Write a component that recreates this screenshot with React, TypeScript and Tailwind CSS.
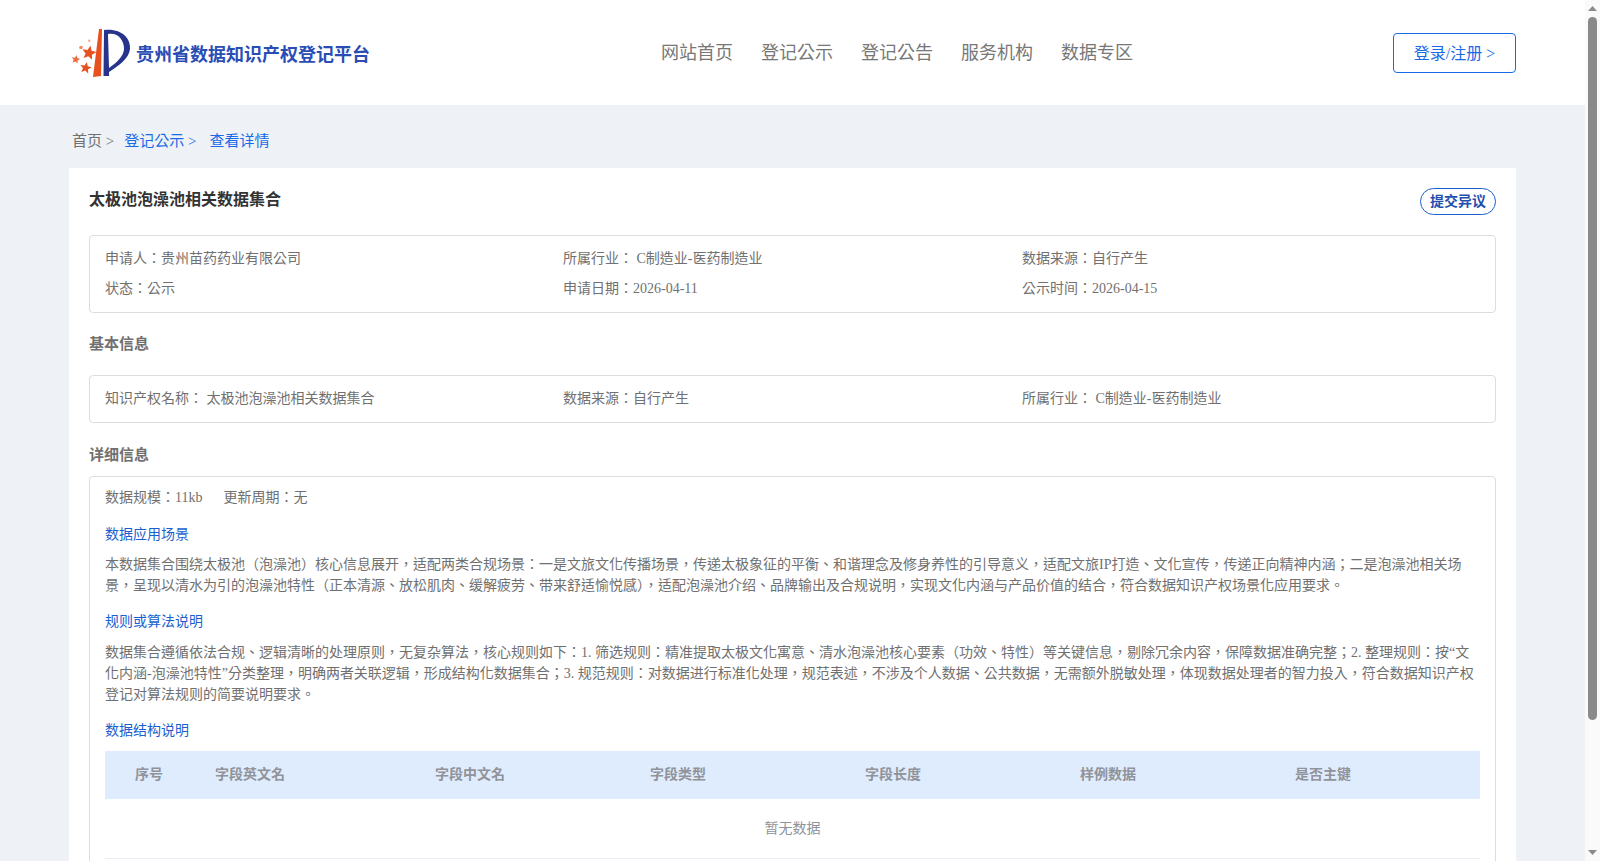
const serif = "font-['Liberation_Serif','Noto_Sans_CJK_TC',serif]";

// points for a five pointed star, slightly tilted like the logo
const star = (cx: number, cy: number, r: number) =>
  Array.from({ length: 10 }, (_, i) => {
    const a = -Math.PI / 2 + 0.2 + (i * Math.PI) / 5;
    const d = i % 2 === 0 ? r : r * 0.45;
    return `${(cx + d * Math.cos(a)).toFixed(1)},${(cy + d * Math.sin(a)).toFixed(1)}`;
  }).join(" ");

function Logo() {
  return (
    <svg width="62" height="54" viewBox="0 0 62 54" className="shrink-0">
      <path d="M30 3 L33 3 L32 50 L24 51 Z" fill="#e8501f" />
      <path d="M35 4 C52 2 62 12 61 23 C60 33 49 40 40 46 L40 50 L34.500 50 Z" fill="#27348b" />
      <path d="M39 8 C49 6 55 14 55 23 C55 30 47 37 40 42 Z" fill="#fff" />
      <polygon points={star(20, 27, 7.500)} fill="#e8501f" />
      <polygon points={star(6.700, 33.500, 4.500)} fill="#ec6a3f" />
      <polygon points={star(16.700, 42, 6)} fill="#e8501f" />
      <circle cx="12" cy="21.500" r="1.800" fill="#ef8a66" />
      <circle cx="20.300" cy="14.700" r="1.200" fill="#f3a98c" />
    </svg>
  );
}

function Nav() {
  return (
    <header className="flex h-[105px] items-center bg-white">
      <div className="mx-auto flex w-[1447px] items-center">
        <div className="flex w-[571px] items-center">
          <Logo />
          <span className="ml-[5px] mt-1 text-lg font-bold text-[#2a4db5]">贵州省数据知识产权登记平台</span>
        </div>
        <nav className="ml-[21px] flex gap-[28px] text-lg text-[#777]">
          <a>网站首页</a>
          <a>登记公示</a>
          <a>登记公告</a>
          <a>服务机构</a>
          <a>数据专区</a>
        </nav>
        <button className="ml-auto h-10 w-[123px] rounded border border-[#1a6ae8] bg-white pt-[2px] text-base text-[#1a6ae8]">
          登录/注册 &gt;
        </button>
      </div>
    </header>
  );
}

function InfoRow({ items }: { items: string[] }) {
  return (
    <div className="grid grid-cols-[458px_459px_1fr] text-sm text-[#707070]">
      {items.map((t) => (
        <span key={t}>{t}</span>
      ))}
    </div>
  );
}

const columns = [
  { title: "序号", w: "w-[80px] pl-[30px]" },
  { title: "字段英文名", w: "w-[220px] pl-[30px]" },
  { title: "字段中文名", w: "w-[215px] pl-[30px]" },
  { title: "字段类型", w: "w-[215px] pl-[30px]" },
  { title: "字段长度", w: "w-[215px] pl-[30px]" },
  { title: "样例数据", w: "w-[215px] pl-[30px]" },
  { title: "是否主键", w: "flex-1 pl-[30px]" },
];

function Heading({ children }: { children: React.ReactNode }) {
  return <h3 className="text-sm text-[#1a5fd0]">{children}</h3>;
}

export default function App() {
  return (
    <div className={`flex h-[861px] overflow-hidden bg-[#eef2f6] ${serif}`}>
      <div className="min-w-0 flex-1">
        <Nav />
        <div className="mx-auto w-[1447px]">
          <div className="flex h-[63px] items-center pl-[3px] pt-[10px] text-[15px]">
            <span className="text-[#707070]">首页 &gt;</span>
            <span className="ml-[10px] text-[#1a6ae8]">登记公示 &gt;</span>
            <span className="ml-[13px] text-[#1a6ae8]">查看详情</span>
          </div>
          <main className="bg-white px-5 pt-5">
            <div className="flex items-start justify-between">
              <h1 className="text-base font-bold text-[#333]">太极池泡澡池相关数据集合</h1>
              <button className="h-[27px] w-[76px] rounded-[14px] border border-[#1a5fd0] text-sm font-bold text-[#1f4fae]">
                提交异议
              </button>
            </div>
            <section className="mt-[20px] flex h-[78px] flex-col justify-center gap-[10px] rounded border border-[#ddd] px-[15px]">
              <InfoRow items={["申请人：贵州苗药药业有限公司", "所属行业： C制造业-医药制造业", "数据来源：自行产生"]} />
              <InfoRow items={["状态：公示", "申请日期：2026-04-11", "公示时间：2026-04-15"]} />
            </section>
            <h2 className="mt-[20px] text-[15px] font-bold text-[#707070]">基本信息</h2>
            <section className="mt-[19px] flex h-[48px] flex-col justify-center rounded border border-[#ddd] px-[15px]">
              <InfoRow items={["知识产权名称： 太极池泡澡池相关数据集合", "数据来源：自行产生", "所属行业： C制造业-医药制造业"]} />
            </section>
            <h2 className="mt-[21px] text-[15px] font-bold text-[#707070]">详细信息</h2>
            <section className="mt-[10px] rounded border border-[#ddd] px-[15px] pt-[11px] pb-4 text-sm text-[#707070]">
              <div className="flex gap-[21px]">
                <span>数据规模：11kb</span>
                <span>更新周期：无</span>
              </div>
              <div className="mt-[17px]">
                <Heading>数据应用场景</Heading>
              </div>
              <p className="mt-[9px] leading-[21px]">
                本数据集合围绕太极池（泡澡池）核心信息展开，适配两类合规场景：一是文旅文化传播场景，传递太极象征的平衡、和谐理念及修身养性的引导意义，适配文旅IP打造、文化宣传，传递正向精神内涵；二是泡澡池相关场景，呈现以清水为引的泡澡池特性（正本清源、放松肌肉、缓解疲劳、带来舒适愉悦感），适配泡澡池介绍、品牌输出及合规说明，实现文化内涵与产品价值的结合，符合数据知识产权场景化应用要求。
              </p>
              <div className="mt-4">
                <Heading>规则或算法说明</Heading>
              </div>
              <p className="mt-[10px] leading-[21px]">
                数据集合遵循依法合规、逻辑清晰的处理原则，无复杂算法，核心规则如下：1. 筛选规则：精准提取太极文化寓意、清水泡澡池核心要素（功效、特性）等关键信息，剔除冗余内容，保障数据准确完整；2. 整理规则：按“文化内涵-泡澡池特性”分类整理，明确两者关联逻辑，形成结构化数据集合；3. 规范规则：对数据进行标准化处理，规范表述，不涉及个人数据、公共数据，无需额外脱敏处理，体现数据处理者的智力投入，符合数据知识产权登记对算法规则的简要说明要求。
              </p>
              <div className="mt-4">
                <Heading>数据结构说明</Heading>
              </div>
              <div className="mt-[10px]">
                <div className="flex h-[48px] items-center bg-[#dfecfe] font-bold text-[#909399]">
                  {columns.map((c) => (
                    <div key={c.title} className={c.w}>
                      {c.title}
                    </div>
                  ))}
                </div>
                <div className="flex h-[60px] items-center justify-center border-b border-[#ebeef5] text-[#909399]">暂无数据</div>
              </div>
            </section>
          </main>
        </div>
      </div>
      <aside className="flex w-[15px] shrink-0 flex-col items-center bg-[#fafafa]">
        <svg width="15" height="17" viewBox="0 0 15 17" className="shrink-0">
          <polygon points="3,11 7.500,6 12,11" fill="#8a8a8a" />
        </svg>
        <div className="h-[703px] w-[9px] shrink-0 rounded-[5px] bg-[#8a8a8a]" />
        <svg width="15" height="17" viewBox="0 0 15 17" className="mt-auto shrink-0">
          <polygon points="3,6 12,6 7.500,11" fill="#8a8a8a" />
        </svg>
      </aside>
    </div>
  );
}
